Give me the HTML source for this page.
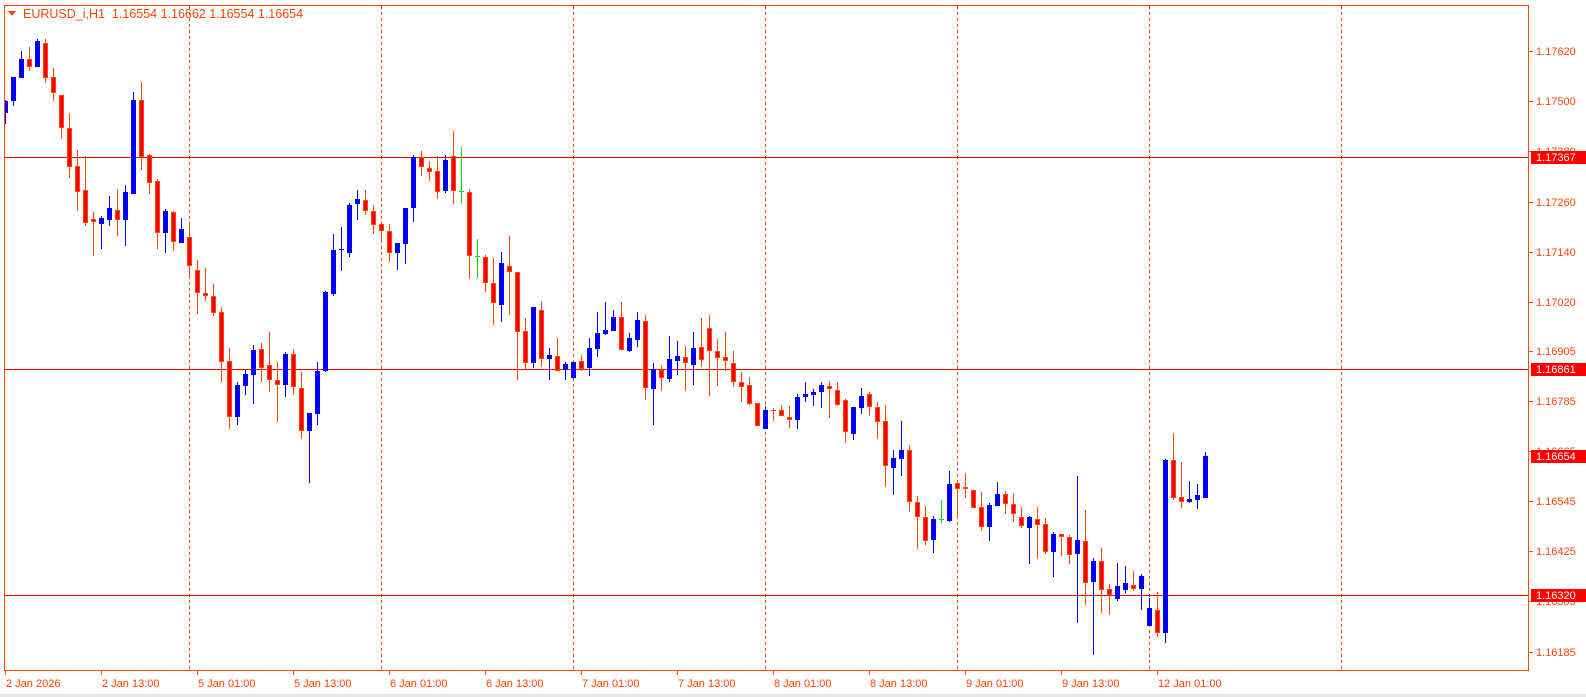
<!DOCTYPE html>
<html><head><meta charset="utf-8">
<style>
html,body{margin:0;padding:0;background:#fff;width:1586px;height:697px;overflow:hidden}
svg{display:block}
text{font-family:"Liberation Sans",sans-serif}
</style></head>
<body>
<svg id="s" width="1586" height="697" xmlns="http://www.w3.org/2000/svg" shape-rendering="crispEdges">
<rect x="0" y="0" width="1586" height="697" fill="#fff"/>
<rect x="0" y="694" width="1586" height="3" fill="#e6e6e6"/>
<g id="grid"></g>
<g id="hl"></g>
<g id="candles"></g>
<rect x="4.5" y="5.5" width="1524" height="665" fill="none" stroke="#ff4500" stroke-width="1"/>
<g id="axis"></g>
<polygon points="8,11 16,11 12,16" fill="#ff4500"/>
<text x="23" y="18" font-size="12.5" fill="#ff4500" shape-rendering="auto" style="white-space:pre" xml:space="preserve">EURUSD_i,H1  1.16554 1.16662 1.16554 1.16654</text>
</svg>
<script>
var D=[
[101,113,100,124,'b'],[77,101,77,106,'b'],[59,78,51,78,'b'],[59,67,47,71,'r'],[41,67,39,67,'b'],
[43,78,39,83,'r'],[77,93,68,101,'r'],[95,128,95,139,'r'],[128,167,113,178,'r'],[166,192,150,211,'r'],
[190,223,156,226,'r'],[219,222,212,256,'r'],[218,224,216,249,'b'],[208,220,196,226,'b'],[210,220,189,236,'r'],
[192,220,185,246,'b'],[100,194,92,194,'b'],[100,157,82,170,'r'],[155,183,154,194,'r'],[181,233,179,249,'r'],
[211,233,209,253,'b'],[212,242,211,251,'r'],[229,243,218,243,'b'],[237,266,225,277,'r'],[270,293,260,314,'r'],
[293,296,268,301,'r'],[296,313,284,316,'r'],[312,362,307,382,'r'],[361,417,348,429,'r'],[385,417,382,425,'b'],
[374,386,370,395,'b'],[350,375,345,404,'b'],[349,368,343,382,'r'],[365,380,332,392,'r'],[380,385,362,422,'r'],
[354,385,352,397,'b'],[354,387,349,395,'r'],[388,431,372,439,'r'],[413,431,413,483,'b'],[371,414,362,425,'b'],
[292,371,291,372,'b'],[250,294,234,296,'b'],[249,250,227,271,'b'],[205,253,203,257,'b'],[199,204,190,220,'b'],
[200,211,190,215,'r'],[211,225,205,234,'r'],[224,231,224,241,'r'],[231,253,224,262,'r'],[243,253,243,270,'b'],
[208,244,208,264,'b'],[157,208,155,222,'b'],[157,167,151,176,'r'],[168,172,161,181,'r'],[171,192,156,199,'r'],
[160,191,155,193,'b'],[156,191,131,204,'r'],[191,191,147,203,'g'],[192,256,189,279,'r'],[256,256,239,278,'g'],
[257,283,255,292,'r'],[283,303,258,325,'r'],[263,305,252,322,'b'],[266,272,236,315,'r'],[272,332,272,380,'r'],
[331,363,318,369,'r'],[307,363,307,368,'b'],[310,359,301,367,'r'],[355,359,348,380,'b'],[356,371,338,371,'r'],
[364,370,362,380,'b'],[362,378,362,379,'b'],[361,369,355,371,'r'],[348,368,338,376,'b'],[333,349,312,357,'b'],
[330,334,302,335,'b'],[317,331,310,331,'b'],[317,350,302,350,'r'],[338,351,333,352,'b'],[320,340,312,347,'b'],
[321,388,315,400,'r'],[369,389,363,425,'b'],[370,378,365,391,'r'],[359,379,336,382,'b'],[356,361,341,375,'b'],
[357,363,346,391,'r'],[348,365,332,385,'b'],[347,360,318,367,'r'],[328,351,315,396,'r'],[351,358,339,386,'r'],
[357,361,332,371,'r'],[363,382,351,387,'r'],[382,387,372,402,'r'],[385,404,377,405,'r'],[403,426,403,426,'r'],
[410,429,406,429,'b'],[410,411,408,421,'r'],[410,416,405,416,'r'],[417,420,406,428,'r'],[397,420,394,429,'b'],
[394,397,382,402,'b'],[392,395,389,406,'b'],[385,392,382,408,'b'],[386,389,381,418,'r'],[390,405,382,406,'r'],
[400,432,399,443,'r'],[407,434,407,440,'b'],[396,408,388,414,'b'],[394,407,392,416,'r'],[407,422,402,439,'r'],
[421,466,405,487,'r'],[458,468,450,495,'b'],[450,459,421,476,'b'],[450,502,445,512,'r'],[502,517,496,549,'r'],
[517,541,506,545,'r'],[519,540,516,553,'b'],[519,519,500,523,'g'],[484,521,471,522,'b'],[483,489,483,517,'r'],
[487,489,473,498,'r'],[490,508,490,508,'r'],[507,527,492,531,'r'],[505,527,503,541,'b'],[494,506,482,506,'b'],
[494,504,491,514,'r'],[504,514,493,522,'r'],[517,526,507,528,'r'],[517,528,516,564,'b'],[519,525,507,559,'r'],
[524,552,518,554,'r'],[534,552,532,577,'b'],[534,537,534,556,'r'],[537,555,535,564,'r'],[540,554,476,623,'b'],
[541,583,510,605,'r'],[561,582,558,655,'b'],[561,590,548,613,'r'],[589,595,584,615,'r'],[586,599,563,601,'b'],
[583,590,566,593,'b'],[585,589,571,591,'r'],[576,589,574,610,'b'],[608,626,598,626,'b'],[610,633,592,637,'r'],
[460,633,459,643,'b'],[460,498,433,500,'r'],[497,502,462,508,'r'],[499,502,481,503,'b'],[495,500,484,509,'b'],
[456,498,452,498,'b']
];
var NS='http://www.w3.org/2000/svg';
function el(p,n,a,t){var e=document.createElementNS(NS,n);for(var k in a)e.setAttribute(k,a[k]);if(t)e.textContent=t;p.appendChild(e);return e;}
var cg=document.getElementById('candles');
var clip=el(document.getElementById('s'),'clipPath',{id:'cp'});
el(clip,'rect',{x:5,y:6,width:1523,height:664});
cg.setAttribute('clip-path','url(#cp)');
D.forEach(function(d,i){
 var cx=5+8*i;var c=d[4];
 var wc=c=='b'?'#0000ff':(c=='g'?'#00dd00':'#ff4500');
 el(cg,'rect',{x:cx,y:d[2],width:1,height:Math.max(1,d[3]-d[2]),fill:wc});
 if(c=='g'){el(cg,'rect',{x:cx-2,y:d[0],width:5,height:1,fill:'#00dd00'});return;}
 var h=Math.max(1,d[1]-d[0]);
 if(c=='b'){el(cg,'rect',{x:cx-2,y:d[0],width:5,height:h,fill:'#0000ff'});}
 else{el(cg,'rect',{x:cx-2,y:d[0],width:5,height:h,fill:'#ff4500'});
  if(h>2)el(cg,'rect',{x:cx-1,y:d[0]+1,width:3,height:h-2,fill:'#ff0000'});}
});
var g=document.getElementById('grid');
[189,381,573,765,957,1149,1341].forEach(function(x){
 el(g,'line',{x1:x+.5,y1:6,x2:x+.5,y2:670,stroke:'#ff4500','stroke-width':1,'stroke-dasharray':'3,3'});
});
var hl=document.getElementById('hl');
[157,369,595].forEach(function(y){el(hl,'rect',{x:5,y:y,width:1524,height:1,fill:'#ff0000'});});
var ax=document.getElementById('axis');
var ticks=[['1.17620',51],['1.17500',101],['1.17380',151],['1.17260',202],['1.17140',252],['1.17020',302],['1.16905',351],['1.16785',401],['1.16665',451],['1.16545',501],['1.16425',551],['1.16305',601],['1.16185',652]];
ticks.forEach(function(t){
 el(ax,'rect',{x:1529,y:t[1],width:4,height:1,fill:'#ff4500'});
 el(ax,'text',{x:1536,y:t[1]+4,'font-size':11,fill:'#ff4500','shape-rendering':'auto'},t[0]);
});
[['1.17367',157],['1.16861',369],['1.16654',456],['1.16320',595]].forEach(function(t){
 el(ax,'rect',{x:1531,y:t[1]-6,width:55,height:13,fill:'#ff0000'});
 el(ax,'text',{x:1536,y:t[1]+4,'font-size':11,fill:'#ffffff','shape-rendering':'auto'},t[0]);
});
var labs=['2 Jan 2026','2 Jan 13:00','5 Jan 01:00','5 Jan 13:00','6 Jan 01:00','6 Jan 13:00','7 Jan 01:00','7 Jan 13:00','8 Jan 01:00','8 Jan 13:00','9 Jan 01:00','9 Jan 13:00','12 Jan 01:00'];
labs.forEach(function(l,i){
 var x=5+96*i;
 el(ax,'rect',{x:x,y:671,width:1,height:4,fill:'#ff4500'});
 el(ax,'text',{x:x+1,y:687,'font-size':11,fill:'#ff4500','shape-rendering':'auto'},l);
});
</script>
</body></html>
